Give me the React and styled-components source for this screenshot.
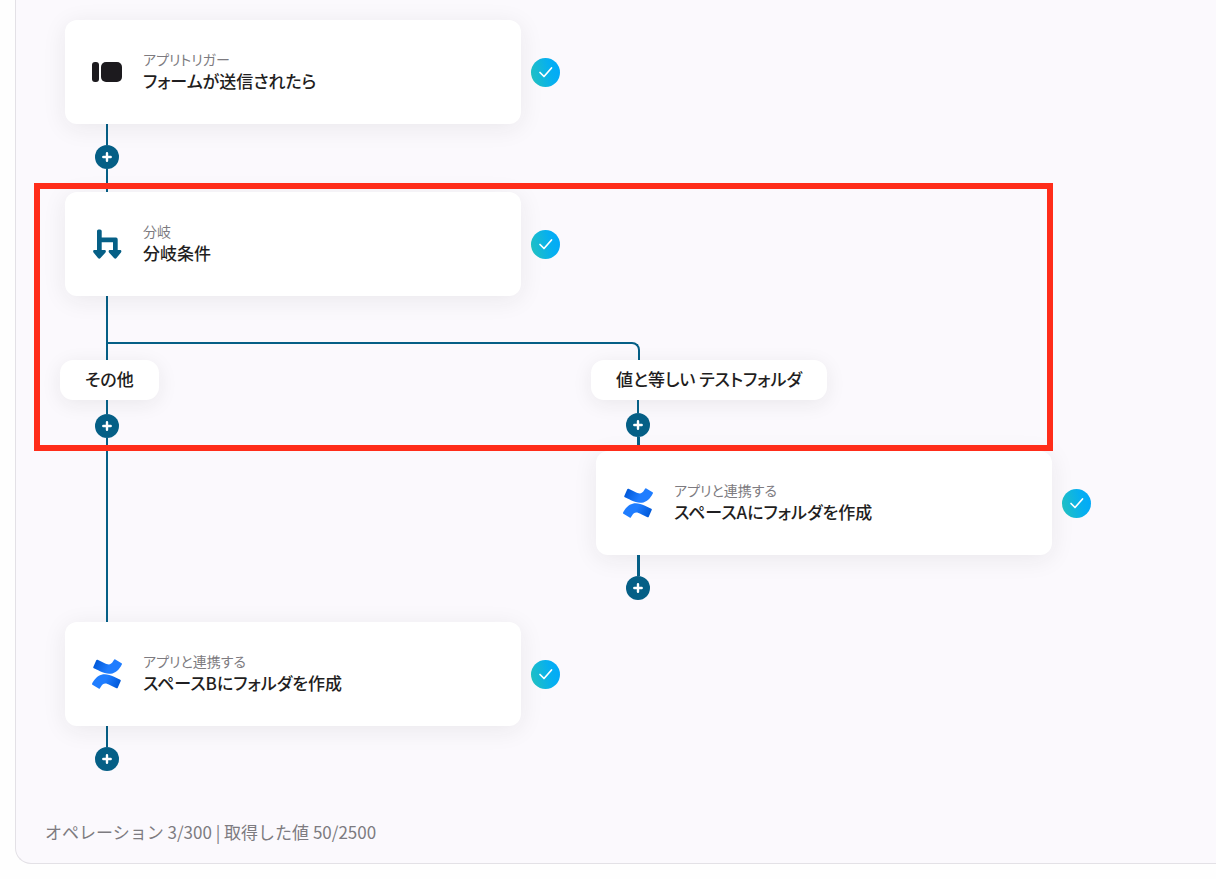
import { useId } from 'react';
import styled, { createGlobalStyle } from 'styled-components';

const GlobalStyle = createGlobalStyle`
  * {
    box-sizing: border-box;
  }

  body {
    margin: 0;
    background: #fefefe;
    color: #1f1e21;
    font-family: "Noto Sans CJK JP", "Noto Sans", sans-serif;
    font-feature-settings: "palt";
  }
`;

const Panel = styled.main`
  margin: 0 0 15px 15px;
  padding: 20px 0 19px 29px;
  background: #fbf9fd;
  border: solid #e3e1e6;
  border-width: 0 0 1px 1px;
  border-bottom-left-radius: 16px;
  overflow: hidden;
`;

const Flow = styled.div`
  padding-left: 20px;
`;

const Row = styled.div`
  display: flex;
  align-items: center;
  gap: 10px;
`;

const Card = styled.article`
  display: flex;
  align-items: center;
  gap: 20px;
  flex: none;
  width: 456px;
  height: 104px;
  padding: 0 26px;
  background: #fff;
  border-radius: 12px;
  box-shadow: 0 4px 24px rgba(36, 34, 40, 0.08);

  svg {
    flex: none;
  }
`;

const Labels = styled.div`
  padding-bottom: 2px;
`;

const Kind = styled.p`
  margin: 0;
  font-size: 14px;
  line-height: 20px;
  color: #7d7b80;
`;

const Title = styled.h2`
  margin: 0;
  font-size: 17px;
  font-weight: 500;
  line-height: 24px;
`;

const Status = styled.span`
  display: flex;
  align-items: center;
  justify-content: center;
  flex: none;
  width: 29px;
  height: 29px;
  border-radius: 50%;
  background: linear-gradient(75deg, #22c1c0 5%, #06aff0 65%, #00a8fc);
`;

const Line = styled.div`
  width: ${(p) => (p.$thick ? 3 : 2)}px;
  height: ${(p) => p.$height}px;
  flex: ${(p) => (p.$fill ? '1' : 'none')};
  margin-left: 41px;
  background: #055f86;
`;

const AddButton = styled.button`
  display: flex;
  align-items: center;
  justify-content: center;
  flex: none;
  width: 24px;
  height: 24px;
  margin-left: 30px;
  padding: 0;
  border: 0;
  border-radius: 50%;
  background: #055f86;
  cursor: pointer;
`;

const BranchSection = styled.section`
  position: relative;
`;

const Highlight = styled.div`
  position: absolute;
  top: -9px;
  left: -31px;
  width: 1019px;
  height: 268px;
  border: 6px solid #ff2d1a;
  pointer-events: none;
`;

const Fork = styled.div`
  width: 534px;
  height: 18px;
  margin-left: 41px;
  border: 2px solid #055f86;
  border-bottom: 0;
  border-top-right-radius: 8px;
`;

const Branches = styled.div`
  display: grid;
  grid-template-columns: 531px auto;
`;

const Branch = styled.div`
  display: flex;
  flex-direction: column;
  align-items: flex-start;
  padding-bottom: ${(p) => (p.$open ? 22 : 0)}px;
`;

const Pill = styled.div`
  margin-left: -5px;
  padding: 7px 25px 9px;
  background: #fff;
  border-radius: 13px;
  box-shadow: 0 4px 20px rgba(36, 34, 40, 0.08);
  font-size: 17px;
  font-weight: 500;
  line-height: 24px;
  white-space: nowrap;
`;

const Usage = styled.footer`
  margin-top: 49px;
  font-size: 17px;
  line-height: 24px;
  font-feature-settings: normal;
  color: #7d7b80;
`;

const TriggerIcon = () => (
  <svg width="32" height="32" viewBox="0 0 32 32" fill="#1c1a1e" aria-hidden="true">
    <rect x="1" y="6" width="7" height="20" rx="3" />
    <rect x="10" y="6" width="21" height="20" rx="5" />
  </svg>
);

const BranchIcon = () => (
  <svg width="32" height="32" viewBox="0 0 32 32" fill="#055f86" aria-hidden="true">
    <path d="M6 3Q6 1.500 7.500 1.500H9Q10.700 1.500 10.700 3V9.500H25Q26.700 9.500 26.700 11.500V22H29.500Q31 22.500 30 24.500L25.500 30Q24.300 31.300 23 30L18 24.500Q17 22.500 18.500 22H22V14.300H10.700V22H14Q15.500 22.500 14.500 24.500L9.500 30Q8.300 31.300 7 30L2.500 24.500Q1.500 22.500 3 22H6Z" />
  </svg>
);

const ConfluenceIcon = () => {
  const id = useId();
  return (
    <svg width="32" height="32" viewBox="-0.8 -0.8 25.6 25.6" aria-hidden="true">
      <defs>
        <linearGradient id={`${id}a`} x1="23" y1="22" x2="10" y2="15" gradientUnits="userSpaceOnUse">
          <stop offset="0.1" stopColor="#0058d8" />
          <stop offset="0.9" stopColor="#1f7dff" />
        </linearGradient>
        <linearGradient id={`${id}b`} x1="1" y1="2" x2="14" y2="9" gradientUnits="userSpaceOnUse">
          <stop offset="0.1" stopColor="#0058d8" />
          <stop offset="0.9" stopColor="#1f7dff" />
        </linearGradient>
      </defs>
      <path
        fill={`url(#${id}a)`}
        d="M.87 18.257c-.248.382-.53.875-.763 1.245a.764.764 0 0 0 .255 1.04l4.965 3.054a.764.764 0 0 0 1.058-.26c.199-.332.454-.763.733-1.221 1.967-3.247 3.945-2.853 7.508-1.146l4.957 2.337a.764.764 0 0 0 1.028-.382l2.364-5.346a.764.764 0 0 0-.382-1 599.851 599.851 0 0 1-4.965-2.361C10.911 10.97 5.224 11.185.87 18.257z"
      />
      <path
        fill={`url(#${id}b)`}
        d="M23.131 5.743c.249-.405.531-.875.764-1.25a.764.764 0 0 0-.256-1.034L18.675.404a.764.764 0 0 0-1.058.26c-.195.335-.451.763-.734 1.225-1.966 3.246-3.945 2.85-7.508 1.146L4.437.694a.764.764 0 0 0-1.027.382L1.046 6.422a.764.764 0 0 0 .382 1c1.039.49 3.105 1.467 4.965 2.361 6.698 3.246 12.392 3.029 16.738-4.04z"
      />
    </svg>
  );
};

const Add = () => (
  <AddButton type="button" aria-label="追加">
    <svg width="10" height="10" viewBox="0 0 10 10" stroke="#fff" strokeWidth="2.4" strokeLinecap="round">
      <path d="M5 1.300v7.400M1.300 5h7.400" />
    </svg>
  </AddButton>
);

const Step = ({ icon, kind, title }) => (
  <Row>
    <Card>
      {icon}
      <Labels>
        <Kind>{kind}</Kind>
        <Title>{title}</Title>
      </Labels>
    </Card>
    <Status role="img" aria-label="完了">
      <svg width="15" height="15" viewBox="0 0 15 15" fill="none" stroke="#fff" strokeWidth="1.7" strokeLinecap="round" strokeLinejoin="round">
        <path d="M2 7.500L6 11.500L13.500 3" />
      </svg>
    </Status>
  </Row>
);

const App = () => {
  return (
    <>
      <GlobalStyle />
      <Panel>
        <Flow>
          <Step icon={<TriggerIcon />} kind="アプリトリガー" title="フォームが送信されたら" />
          <Line $height={21} />
          <Add />
          <Line $height={23} />
          <BranchSection>
            <Step icon={<BranchIcon />} kind="分岐" title="分岐条件" />
            <Line $height={46} />
            <Fork />
            <Branches>
              <Branch>
                <Pill>その他</Pill>
                <Line $height={14} />
                <Add />
                <Line $fill />
              </Branch>
              <Branch $open>
                <Pill>値と等しい テストフォルダ</Pill>
                <Line $height={13} />
                <Add />
                <Line $height={14} $thick />
                <Step icon={<ConfluenceIcon />} kind="アプリと連携する" title="スペースAにフォルダを作成" />
                <Line $height={21} $thick />
                <Add />
              </Branch>
            </Branches>
            <Highlight />
          </BranchSection>
          <Step icon={<ConfluenceIcon />} kind="アプリと連携する" title="スペースBにフォルダを作成" />
          <Line $height={21} />
          <Add />
        </Flow>
        <Usage>オペレーション 3/300 | 取得した値 50/2500</Usage>
      </Panel>
    </>
  );
};

export default App;
